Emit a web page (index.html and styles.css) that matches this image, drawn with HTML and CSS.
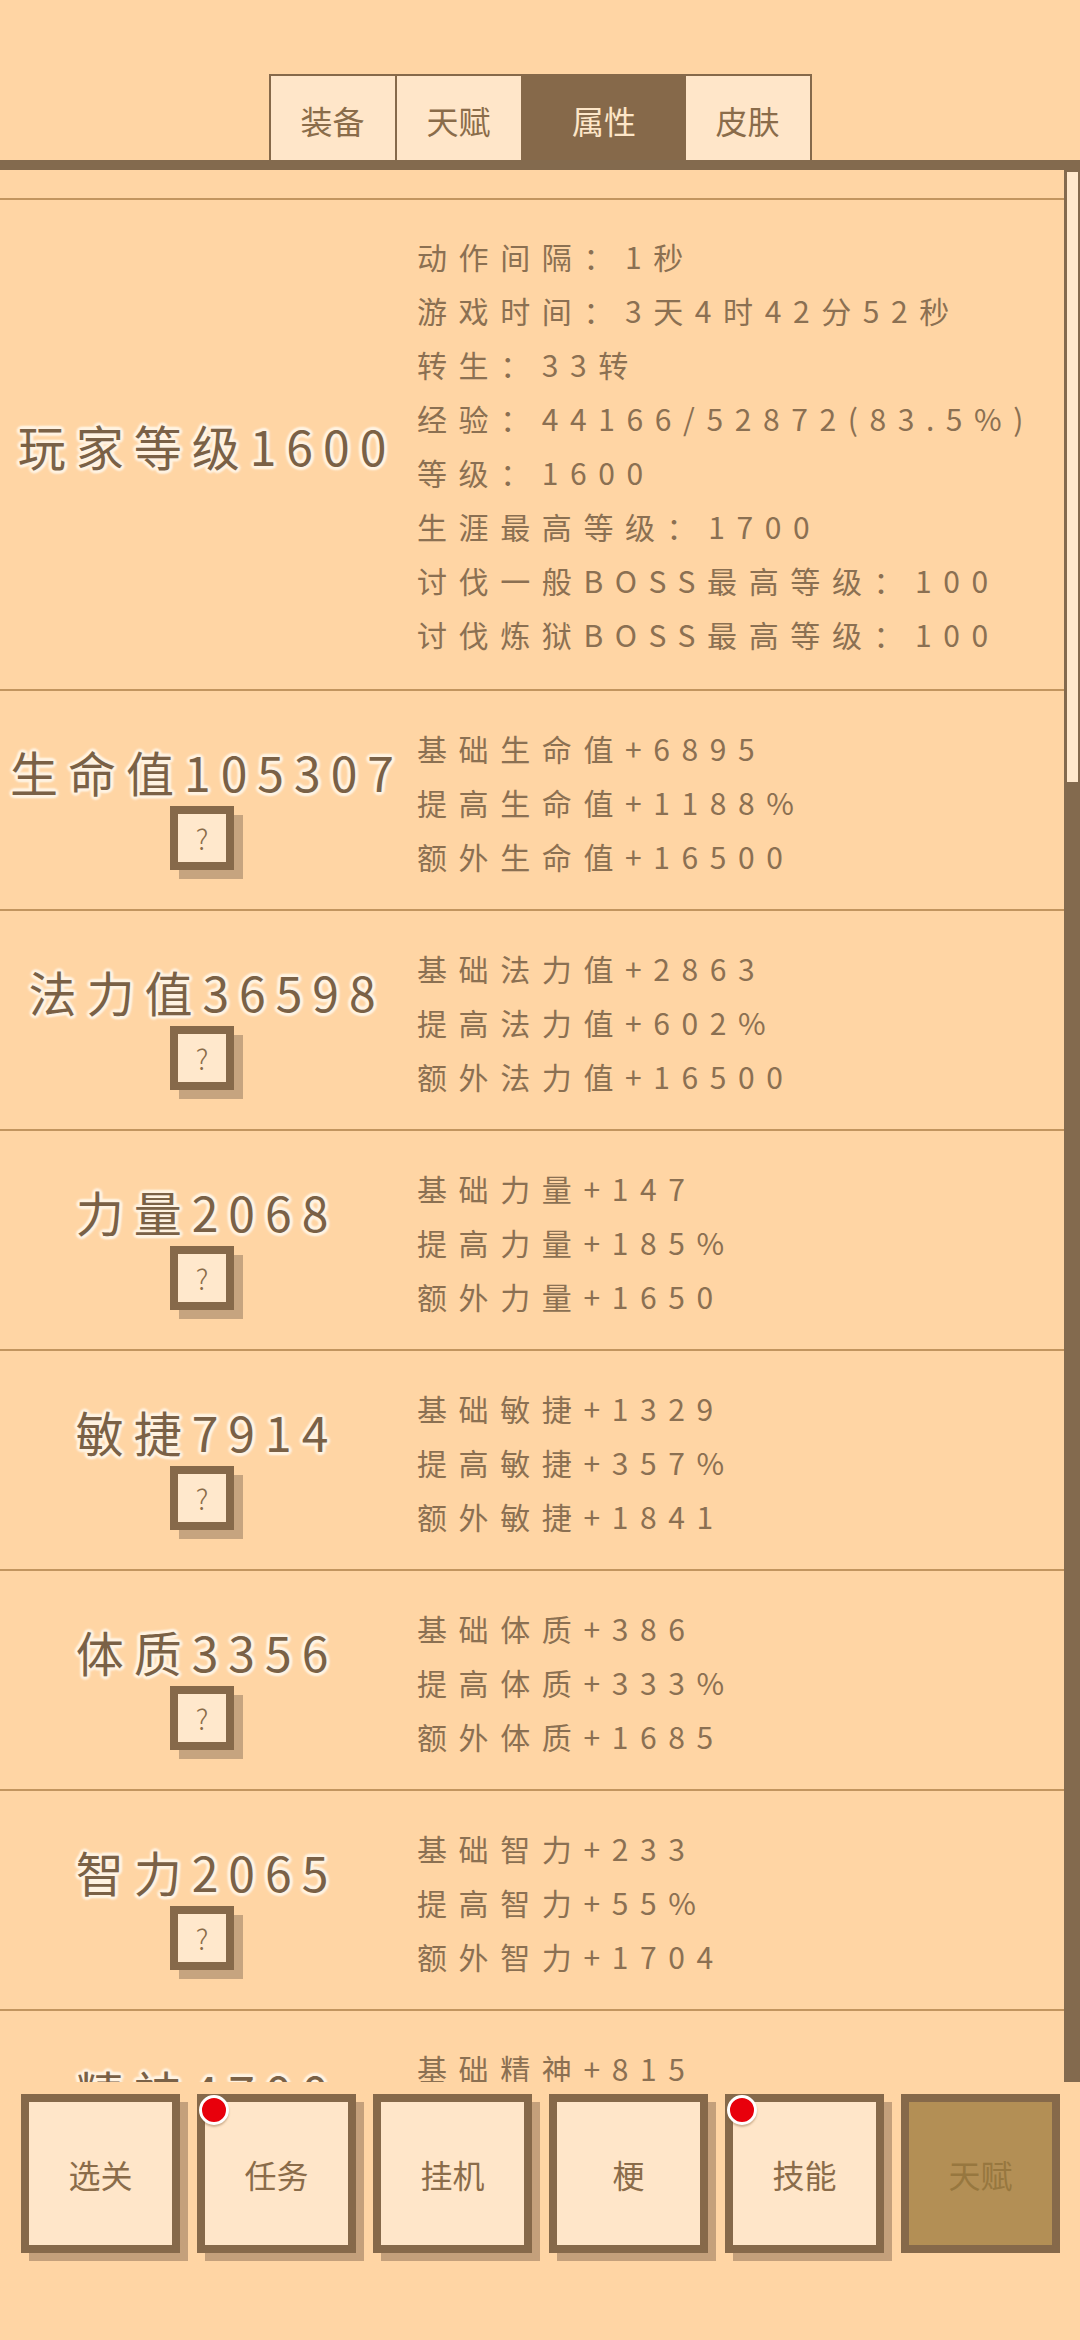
FILE: index.html
```html
<!DOCTYPE html>
<html lang="zh-CN">
<head>
<meta charset="utf-8">
<title>属性</title>
<link rel="stylesheet" href="styles.css">
</head>
<body>
<div class="page">
  <div class="tabs">
    <div class="tab t1">装备</div>
    <div class="tab t2">天赋</div>
    <div class="tab t3 active">属性</div>
    <div class="tab t4">皮肤</div>
  </div>
  <div class="bar"></div>
  <div class="main">
    <div class="list">
      <div class="row pre"></div>
      <div class="row first">
        <div class="lcol"><div class="label">玩家等级1600</div></div>
        <div class="rcol">
          <div class="line">动作间隔：1秒</div>
          <div class="line">游戏时间：3天4时42分52秒</div>
          <div class="line">转生：33转</div>
          <div class="line">经验：44166/52872(83.5%)</div>
          <div class="line">等级：1600</div>
          <div class="line">生涯最高等级：1700</div>
          <div class="line">讨伐一般BOSS最高等级：100</div>
          <div class="line">讨伐炼狱BOSS最高等级：100</div>
        </div>
      </div>
      <div class="row stat">
        <div class="lcol"><div class="label">生命值105307</div><div class="help">?</div></div>
        <div class="rcol">
          <div class="line">基础生命值+6895</div>
          <div class="line">提高生命值+1188%</div>
          <div class="line">额外生命值+16500</div>
        </div>
      </div>
      <div class="row stat">
        <div class="lcol"><div class="label">法力值36598</div><div class="help">?</div></div>
        <div class="rcol">
          <div class="line">基础法力值+2863</div>
          <div class="line">提高法力值+602%</div>
          <div class="line">额外法力值+16500</div>
        </div>
      </div>
      <div class="row stat">
        <div class="lcol"><div class="label">力量2068</div><div class="help">?</div></div>
        <div class="rcol">
          <div class="line">基础力量+147</div>
          <div class="line">提高力量+185%</div>
          <div class="line">额外力量+1650</div>
        </div>
      </div>
      <div class="row stat">
        <div class="lcol"><div class="label">敏捷7914</div><div class="help">?</div></div>
        <div class="rcol">
          <div class="line">基础敏捷+1329</div>
          <div class="line">提高敏捷+357%</div>
          <div class="line">额外敏捷+1841</div>
        </div>
      </div>
      <div class="row stat">
        <div class="lcol"><div class="label">体质3356</div><div class="help">?</div></div>
        <div class="rcol">
          <div class="line">基础体质+386</div>
          <div class="line">提高体质+333%</div>
          <div class="line">额外体质+1685</div>
        </div>
      </div>
      <div class="row stat">
        <div class="lcol"><div class="label">智力2065</div><div class="help">?</div></div>
        <div class="rcol">
          <div class="line">基础智力+233</div>
          <div class="line">提高智力+55%</div>
          <div class="line">额外智力+1704</div>
        </div>
      </div>
      <div class="row stat">
        <div class="lcol"><div class="label">精神4700</div><div class="help">?</div></div>
        <div class="rcol">
          <div class="line">基础精神+815</div>
          <div class="line">提高精神+210%</div>
          <div class="line">额外精神+1650</div>
        </div>
      </div>
    </div>
    <div class="scrollbar"><div class="thumb"></div></div>
  </div>
  <div class="nav">
    <div class="btn">选关</div>
    <div class="btn">任务<span class="dot"></span></div>
    <div class="btn">挂机</div>
    <div class="btn">梗</div>
    <div class="btn">技能<span class="dot"></span></div>
    <div class="btn current">天赋</div>
  </div>
</div>
</body>
</html>
```
FILE: styles.css
```css
* { box-sizing: border-box; }
html, body {
  margin: 0;
  padding: 0;
}
body {
  width: 1080px;
  height: 2340px;
  background: #ffd5a4;
  font-family: "Noto Sans CJK SC", "Noto Sans", sans-serif;
  color: #8b7052;
  overflow: hidden;
}
.page {
  display: flex;
  flex-direction: column;
  height: 2340px;
}
.tabs {
  display: flex;
  justify-content: center;
  padding-top: 74px;
}
.tab {
  height: 86px;
  border: 2px solid #86694a;
  border-bottom: none;
  background: #ffe6c9;
  display: flex;
  align-items: center;
  justify-content: center;
  font-size: 32px;
  color: #8a6c4a;
  padding-top: 4px;
}
.t1 { width: 128px; }
.t2 { width: 126px; border-left: none; }
.t3 { width: 163px; border-left: none; border-right: none; }
.t4 { width: 126px; border-left: none; }
.tab.active {
  background: #86694a;
  color: #fde6c8;
}
.bar {
  height: 10px;
  background: #836a4e;
}
.main {
  display: flex;
  height: 1912px;
}
.list {
  flex: 1;
  overflow: hidden;
  display: flex;
  flex-direction: column;
}
.row {
  flex: none;
  display: flex;
  border-bottom: 2px solid #c2955f;
}
.row.pre { height: 30px; }
.row.first { height: 491px; }
.row.stat { height: 220px; }
.lcol {
  width: 404px;
  flex: none;
  display: flex;
  flex-direction: column;
  align-items: center;
  justify-content: center;
}
.row.stat .lcol { padding-top: 12px; }
.label {
  font-size: 48px;
  line-height: 58px;
  letter-spacing: 10px;
  margin-right: -10px;
  color: #7a6146;
  white-space: nowrap;
  text-shadow:
    0 0 2px #fff3e2,
    0 0 4px #fff3e2,
    3px 0 2px #fff3e2,
    -3px 0 2px #fff3e2,
    0 3px 2px #fff3e2,
    0 -3px 2px #fff3e2,
    2px 2px 2px #fff3e2,
    -2px -2px 2px #fff3e2,
    2px -2px 2px #fff3e2,
    -2px 2px 2px #fff3e2;
}
.help {
  width: 64px;
  height: 64px;
  margin-top: 6px;
  border: 8px solid #86694a;
  background: #ffe8cc;
  box-shadow: 9px 9px 0 #c6a47f;
  display: flex;
  align-items: center;
  justify-content: center;
  font-size: 28px;
  font-weight: 300;
  color: #8a6c4a;
}
.rcol {
  flex: 1;
  padding-left: 13px;
  display: flex;
  flex-direction: column;
  justify-content: center;
}
.row.stat .rcol { padding-top: 4px; }
.line {
  font-size: 30px;
  line-height: 54px;
  letter-spacing: 11.6px;
  white-space: nowrap;
  color: #8b7052;
}
.scrollbar {
  width: 16px;
  flex: none;
  background: #836a4e;
  padding: 2px 2px 0 3px;
}
.thumb {
  height: 610px;
  background: #ffe8cc;
}
.nav {
  display: flex;
  gap: 17px;
  padding: 12px 0 0 21px;
}
.btn {
  position: relative;
  width: 159px;
  height: 159px;
  border: 8px solid #86694a;
  background: #ffe6c9;
  box-shadow: 8px 8px 0 #c4a07b;
  display: flex;
  align-items: center;
  justify-content: center;
  font-size: 32px;
  color: #8a6c4a;
}
.btn.current {
  background: #b38f55;
  color: #97773f;
  box-shadow: none;
}
.dot {
  position: absolute;
  left: -6px;
  top: -7px;
  width: 30px;
  height: 30px;
  border-radius: 50%;
  background: #e8000c;
  border: 3px solid #ffffff;
  box-shadow: 0 2px 2px rgba(120, 80, 40, 0.35);
}
```
